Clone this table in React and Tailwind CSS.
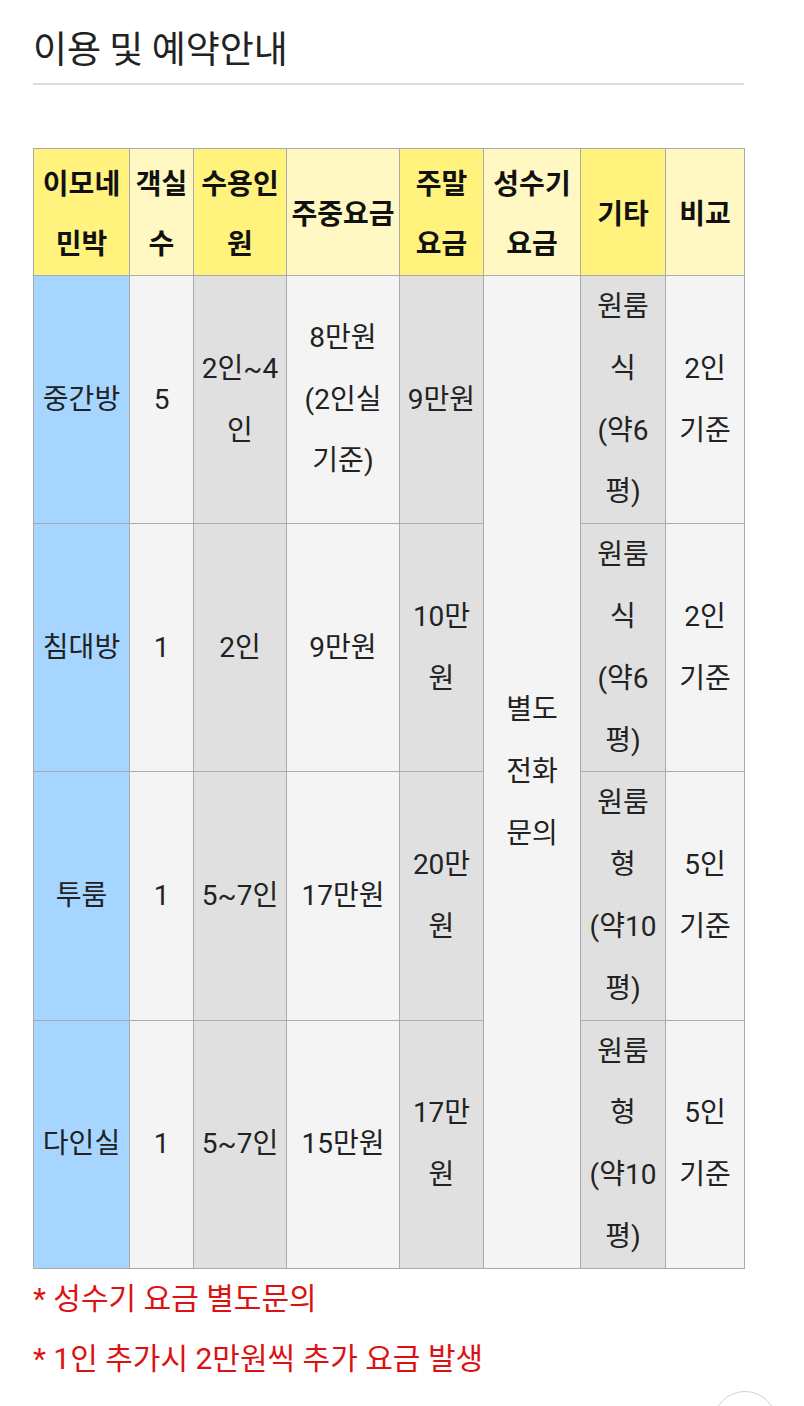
import React from 'react';

const rows = [
  {
    name: '중간방',
    count: '5',
    people: ['2인~4', '인'],
    weekday: ['8만원', '(2인실', '기준)'],
    weekend: ['9만원'],
    etc: ['원룸', '식', '(약6', '평)'],
    note: ['2인', '기준'],
  },
  {
    name: '침대방',
    count: '1',
    people: ['2인'],
    weekday: ['9만원'],
    weekend: ['10만', '원'],
    etc: ['원룸', '식', '(약6', '평)'],
    note: ['2인', '기준'],
  },
  {
    name: '투룸',
    count: '1',
    people: ['5~7인'],
    weekday: ['17만원'],
    weekend: ['20만', '원'],
    etc: ['원룸', '형', '(약10', '평)'],
    note: ['5인', '기준'],
  },
  {
    name: '다인실',
    count: '1',
    people: ['5~7인'],
    weekday: ['15만원'],
    weekend: ['17만', '원'],
    etc: ['원룸', '형', '(약10', '평)'],
    note: ['5인', '기준'],
  },
];

const Lines = ({ items }) =>
  items.map((t, i) => (
    <React.Fragment key={i}>
      {i > 0 && <br />}
      {t}
    </React.Fragment>
  ));

const th = 'border border-[#aaaaaa] px-0 text-center align-middle text-[28px] font-bold text-[#111] leading-[60px] whitespace-nowrap';
const td = 'border border-[#aaaaaa] px-0 text-center align-middle text-[28px] text-[#222] leading-[61.8px] whitespace-nowrap';

const App = () => {
  return (
    <div className="relative min-h-[1406px] w-[804px] overflow-hidden bg-white font-['Roboto','Noto_Sans_CJK_KR',sans-serif]">
      <div className="ml-[33px] w-[711px]">
        <h2 className="pt-[22px] pb-[10px] font-['Noto_Sans_CJK_KR',sans-serif] text-[37px] font-normal leading-[51px] text-[#222]">
          이용 및 예약안내
        </h2>
        <div className="h-[2px] bg-[#dddddd]" />

        <table className="mt-[63px] w-[711px] table-fixed border-collapse">
          <colgroup>
            <col className="w-[96px]" />
            <col className="w-[64px]" />
            <col className="w-[93px]" />
            <col className="w-[113px]" />
            <col className="w-[84px]" />
            <col className="w-[97px]" />
            <col className="w-[85px]" />
            <col className="w-[79px]" />
          </colgroup>
          <thead>
            <tr className="h-[127px] font-['Noto_Sans_CJK_KR',sans-serif]">
              <th className={`${th} bg-[#fff27d]`}>이모네<br />민박</th>
              <th className={`${th} bg-[#fff8c2]`}>객실<br />수</th>
              <th className={`${th} bg-[#fff27d]`}>수용인<br />원</th>
              <th className={`${th} bg-[#fff8c2]`}>주중요금</th>
              <th className={`${th} bg-[#fff27d]`}>주말<br />요금</th>
              <th className={`${th} bg-[#fff8c2]`}>성수기<br />요금</th>
              <th className={`${th} bg-[#fff27d]`}>기타</th>
              <th className={`${th} bg-[#fff8c2]`}>비교</th>
            </tr>
          </thead>
          <tbody>
            {rows.map((r, i) => (
              <tr key={r.name}>
                <td className={`${td} bg-[#a6d6ff]`}>{r.name}</td>
                <td className={`${td} bg-[#f4f4f4]`}>{r.count}</td>
                <td className={`${td} bg-[#e0e0e0]`}><Lines items={r.people} /></td>
                <td className={`${td} bg-[#f4f4f4]`}><Lines items={r.weekday} /></td>
                <td className={`${td} bg-[#e0e0e0]`}><Lines items={r.weekend} /></td>
                {i === 0 && (
                  <td rowSpan={4} className={`${td} bg-[#f4f4f4]`}>
                    별도<br />전화<br />문의
                  </td>
                )}
                <td className={`${td} bg-[#e0e0e0]`}><Lines items={r.etc} /></td>
                <td className={`${td} bg-[#f4f4f4]`}><Lines items={r.note} /></td>
              </tr>
            ))}
          </tbody>
        </table>

        <div className="text-[30px] leading-[60px] text-[#dd1111]">
          <p>* 성수기 요금 별도문의</p>
          <p>* 1인 추가시 2만원씩 추가 요금 발생</p>
        </div>
      </div>

      {/* floating top button, cut off by the viewport */}
      <div className="absolute left-[713px] top-[1391px] h-[64px] w-[64px] rounded-full border border-[#d0d0d0] bg-white" />
    </div>
  );
};

export default App;
